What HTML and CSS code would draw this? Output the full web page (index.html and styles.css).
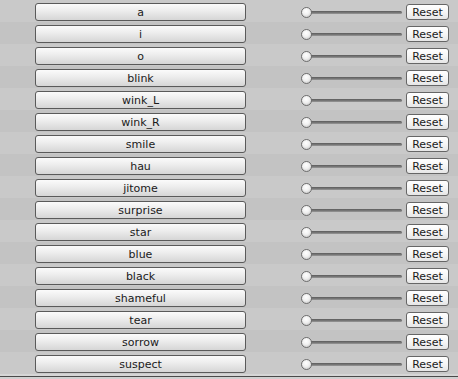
FILE: index.html
```html
<!DOCTYPE html>
<html>
<head>
<meta charset="utf-8">
<link rel="stylesheet" href="styles.css">
</head>
<body>
<div class="panel">
  <div class="row"><button class="name">a</button><div class="slider"><span class="knob"></span><span class="track"></span></div><button class="reset">Reset</button></div>
  <div class="row"><button class="name">i</button><div class="slider"><span class="knob"></span><span class="track"></span></div><button class="reset">Reset</button></div>
  <div class="row"><button class="name">o</button><div class="slider"><span class="knob"></span><span class="track"></span></div><button class="reset">Reset</button></div>
  <div class="row"><button class="name">blink</button><div class="slider"><span class="knob"></span><span class="track"></span></div><button class="reset">Reset</button></div>
  <div class="row"><button class="name">wink_L</button><div class="slider"><span class="knob"></span><span class="track"></span></div><button class="reset">Reset</button></div>
  <div class="row"><button class="name">wink_R</button><div class="slider"><span class="knob"></span><span class="track"></span></div><button class="reset">Reset</button></div>
  <div class="row"><button class="name">smile</button><div class="slider"><span class="knob"></span><span class="track"></span></div><button class="reset">Reset</button></div>
  <div class="row"><button class="name">hau</button><div class="slider"><span class="knob"></span><span class="track"></span></div><button class="reset">Reset</button></div>
  <div class="row"><button class="name">jitome</button><div class="slider"><span class="knob"></span><span class="track"></span></div><button class="reset">Reset</button></div>
  <div class="row"><button class="name">surprise</button><div class="slider"><span class="knob"></span><span class="track"></span></div><button class="reset">Reset</button></div>
  <div class="row"><button class="name">star</button><div class="slider"><span class="knob"></span><span class="track"></span></div><button class="reset">Reset</button></div>
  <div class="row"><button class="name">blue</button><div class="slider"><span class="knob"></span><span class="track"></span></div><button class="reset">Reset</button></div>
  <div class="row"><button class="name">black</button><div class="slider"><span class="knob"></span><span class="track"></span></div><button class="reset">Reset</button></div>
  <div class="row"><button class="name">shameful</button><div class="slider"><span class="knob"></span><span class="track"></span></div><button class="reset">Reset</button></div>
  <div class="row"><button class="name">tear</button><div class="slider"><span class="knob"></span><span class="track"></span></div><button class="reset">Reset</button></div>
  <div class="row"><button class="name">sorrow</button><div class="slider"><span class="knob"></span><span class="track"></span></div><button class="reset">Reset</button></div>
  <div class="row"><button class="name">suspect</button><div class="slider"><span class="knob"></span><span class="track"></span></div><button class="reset">Reset</button></div>
</div>
<div class="footer"></div>
</body>
</html>
```
FILE: styles.css
```css
html, body {
  margin: 0;
  padding: 0;
  background: #c8c8c8;
  font-family: "DejaVu Sans", sans-serif;
}
.panel {
  display: flex;
  flex-direction: column;
}
.row {
  height: 22px;
  box-sizing: border-box;
  padding: 2px 9px 0 35px;
  display: flex;
  align-items: center;
  background: #c9c9c9;
}
.row:nth-child(even) {
  background: #c3c3c3;
}
button {
  font-family: "DejaVu Sans", sans-serif;
  font-size: 11px;
  color: #1a1a1a;
  margin: 0;
  padding: 1px 0 0 0;
  box-sizing: border-box;
  border: 1px solid #5a5a5a;
  border-radius: 3px;
  background: linear-gradient(to bottom, #fbfbfb 0%, #ececec 45%, #d6d6d6 100%);
  line-height: 14px;
  flex: none;
}
.name {
  width: 211px;
  height: 18px;
}
.slider {
  margin-left: 55px;
  width: 101px;
  height: 12px;
  display: flex;
  align-items: center;
  flex: none;
}
.knob {
  width: 11px;
  height: 11px;
  box-sizing: border-box;
  border-radius: 50%;
  border: 1px solid #6e6e6e;
  background: radial-gradient(circle at 45% 35%, #ffffff 0%, #f0f0f0 45%, #bdbdbd 100%);
  flex: none;
  position: relative;
  z-index: 1;
}
.track {
  flex: 1;
  height: 3px;
  margin-left: -1px;
  border-radius: 0 2px 2px 0;
  background: linear-gradient(to bottom, #5c5c5c 0%, #7a7a7a 60%, #9a9a9a 100%);
}
.reset {
  margin-left: 4px;
  width: 43px;
  height: 16px;
  border-color: #666;
  background: linear-gradient(to bottom, #ffffff 0%, #f6f6f6 50%, #e6e6e6 100%);
}
.footer {
  height: 5px;
  box-sizing: border-box;
  border-top: 2px solid #d6d6d6;
  border-bottom: 2px solid #d0d0d0;
  background: #4a4a4a;
}
```
